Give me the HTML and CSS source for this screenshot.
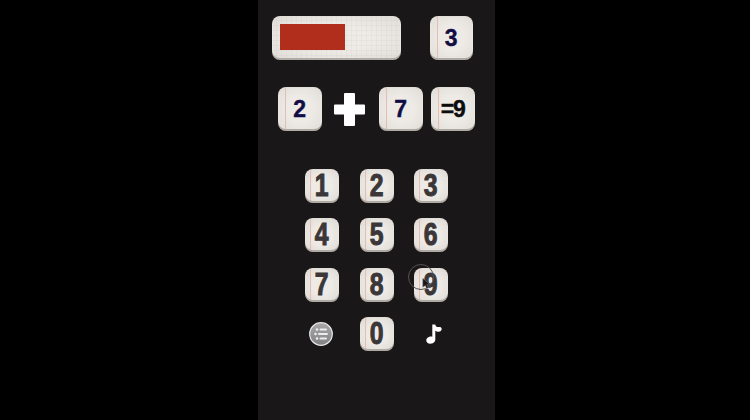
FILE: index.html
```html
<!DOCTYPE html>
<html>
<head>
<meta charset="utf-8">
<title>Math game</title>
<link rel="stylesheet" href="styles.css">
</head>
<body>
<main class="panel">
  <section class="row row-top">
    <div class="tile progress"><div class="progress-fill"></div></div>
    <div class="tile large">3</div>
  </section>
  <section class="row row-sum">
    <div class="tile large">2</div>
    <svg class="plus" viewBox="0 0 31 33" aria-hidden="true"><path d="M11 0H20Q21 0 21 1V11.500H30Q31 11.500 31 12.500V20.500Q31 21.500 30 21.500H21V32Q21 33 20 33H11Q10 33 10 32V21.500H1Q0 21.500 0 20.500V12.500Q0 11.500 1 11.500H10V1Q10 0 11 0Z" fill="#fff"/></svg>
    <div class="tile large">7</div>
    <div class="tile large result">=9</div>
  </section>
  <section class="keypad">
    <button class="tile key"><span class="digit">1</span></button>
    <button class="tile key"><span class="digit">2</span></button>
    <button class="tile key"><span class="digit">3</span></button>
    <button class="tile key"><span class="digit">4</span></button>
    <button class="tile key"><span class="digit">5</span></button>
    <button class="tile key"><span class="digit">6</span></button>
    <button class="tile key"><span class="digit">7</span></button>
    <button class="tile key"><span class="digit">8</span></button>
    <button class="tile key"><span class="digit">9</span>
      <span class="cursor-ring"></span>
      <svg class="cursor" viewBox="0 0 12 14" aria-hidden="true"><path d="M1 0L10 8L6.500 8.500L8.500 13L6 13.500L4.500 9.500L1 12Z" fill="#1a1718" stroke="#8a8a8a" stroke-width=".6"/></svg>
    </button>
    <div class="menu-cell">
      <svg class="menu-icon" viewBox="0 0 24 24" aria-hidden="true">
        <defs><linearGradient id="menu-bg" x1="0" y1="0" x2="0" y2="1"><stop offset="0" stop-color="#a9a9ab"/><stop offset="1" stop-color="#818184"/></linearGradient></defs>
        <circle cx="12" cy="12" r="11.300" fill="url(#menu-bg)" stroke="#e8e8e8" stroke-width="1.200"/>
        <g fill="#ececec">
          <circle cx="8" cy="7.500" r="1.300"/><rect x="10.500" y="6.500" width="7.500" height="2" rx="1"/>
          <circle cx="6.500" cy="12" r="1.300"/><rect x="9" y="11" width="10" height="2" rx="1"/>
          <circle cx="8" cy="16.500" r="1.300"/><rect x="10.500" y="15.500" width="7.500" height="2" rx="1"/>
        </g>
      </svg>
    </div>
    <button class="tile key"><span class="digit">0</span></button>
    <div class="music-cell">
      <svg class="music-icon" viewBox="0 0 16 20" aria-hidden="true"><path d="M6.300 0.500H9.300C9.600 2.500 11 3.300 13 3C14.500 2.800 15.500 3.500 15.700 4.800C15.800 6.500 14.300 7.800 12.500 7.800C11.200 7.800 10.100 7.300 9.300 6.800V15.500C9.300 18 7 19.700 4.300 19.700C1.800 19.700 .3 18.300 .3 16.500C.3 14.200 2.700 12.600 5 12.600C5.500 12.600 5.900 12.700 6.300 12.800Z" fill="#fff"/></svg>
    </div>
  </section>
</main>
</body>
</html>
```
FILE: styles.css
```css
* { box-sizing: border-box; }
html, body { height: 100%; }
body {
  margin: 0;
  background: #000;
  overflow: hidden;
}
.panel {
  width: 237px;
  height: 420px;
  margin-left: 258px;
  padding-top: 16px;
  background: #1a1718;
}
.row { display: flex; align-items: flex-start; }
.row-top { padding-left: 14px; gap: 28.500px; }
.row-sum { margin-top: 27px; padding-left: 20px; }
.tile {
  display: flex;
  align-items: center;
  justify-content: center;
  padding: 0;
  border: 0;
  border-radius: 8px;
  background-color: #e9e5e1;
  background-image:
    linear-gradient(90deg, transparent 7px, #e6bdb5 7px, #e6bdb5 8px, transparent 8px),
    radial-gradient(ellipse at center, #eeebe7 40%, #e0dbd5 100%);
  box-shadow: inset 0 -2px 0 #b0aaa4, inset 0 0 2px #f8f6f4, inset 0 1px 1px #d8d3cd;
}
.large {
  width: 43.500px;
  height: 44px;
  font: 700 23px "Liberation Sans", Arial, sans-serif;
  color: #120e45;
  -webkit-text-stroke: .4px #120e45;
}
.result {
  color: #0c0c0c;
  -webkit-text-stroke: .4px #0c0c0c;
  margin-left: 8.500px;
  letter-spacing: -1px;
}
.progress {
  width: 129px;
  height: 44px;
  justify-content: flex-start;
  padding: 8px 0 10px 8px;
  background-image:
    repeating-linear-gradient(90deg, transparent 0 4px, rgba(170,165,160,.09) 4px 5px),
    repeating-linear-gradient(0deg, transparent 0 4px, rgba(170,165,160,.09) 4px 5px),
    radial-gradient(ellipse at center, #eeebe7 40%, #e0dbd5 100%);
}
.progress-fill { width: 65px; height: 26px; background: #b12e1c; }
.plus { width: 31px; height: 33px; margin: 6px 14.500px 0 12px; }
.keypad {
  display: grid;
  grid-template-columns: repeat(3, 34px);
  grid-auto-rows: 34px;
  column-gap: 20.500px;
  row-gap: 15.300px;
  margin: 38px 0 0 47px;
}
.key {
  position: relative;
  background-image:
    linear-gradient(90deg, transparent 5px, #e6bdb5 5px, #e6bdb5 6px, transparent 6px),
    radial-gradient(ellipse at center, #eeebe7 40%, #dcd7d1 100%);
}
.digit {
  display: inline-block;
  font: 700 31px "Liberation Sans", Arial, sans-serif;
  color: #3b3738;
  -webkit-text-stroke: 1px #3b3738;
  transform: scaleX(.8);
}
.menu-cell, .music-cell { display: flex; align-items: center; justify-content: center; }
.menu-icon { width: 24px; height: 24px; margin-left: -3px; }
.music-icon { width: 16px; height: 20px; margin-left: 5px; }
.cursor-ring {
  position: absolute;
  left: -6px;
  top: -4px;
  width: 26px;
  height: 26px;
  border: 1.500px solid #555254;
  border-radius: 50%;
}
.cursor { position: absolute; left: 8px; top: 10px; width: 9px; height: 11px; }
```
